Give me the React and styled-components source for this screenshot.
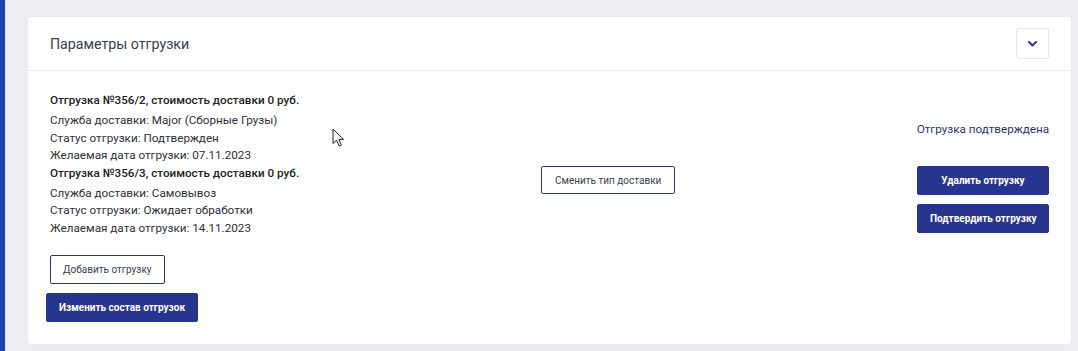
import React from "react";
import styled, { createGlobalStyle } from "styled-components";

const Global = createGlobalStyle`
  html, body { margin: 0; padding: 0; }
  body {
    background: #ececf2;
    font-family: Roboto, "Noto Sans", Arial, sans-serif;
    width: 1078px;
    height: 351px;
    overflow: hidden;
  }
`;

const Page = styled.div`
  position: relative;
  display: flex;
  height: 351px;
`;

const SideStrip = styled.div`
  width: 5px;
  flex: none;
  background: #1a3fb6;
`;

const Main = styled.div`
  flex: 1;
  padding: 17px 7px 7px 23px;
`;

const Card = styled.section`
  background: #fff;
  border-radius: 3px;
  box-shadow: 0 0 1px rgba(40, 40, 80, 0.08);
`;

const Header = styled.header`
  display: flex;
  align-items: center;
  justify-content: space-between;
  height: 53px;
  padding: 0 22px;
  border-bottom: 1px solid #ebebf0;
`;

const Title = styled.h2`
  margin: 0;
  font-size: 14.2px;
  font-weight: 400;
  color: #3b3e4f;
`;

const ToggleButton = styled.button`
  width: 33px;
  height: 31px;
  display: flex;
  align-items: center;
  justify-content: center;
  background: #fff;
  border: 1px solid #e6e6ee;
  border-radius: 2px;
  padding: 0;
  color: #283593;
`;

const Body = styled.div`
  display: grid;
  grid-template-columns: 491px auto 1fr;
  padding: 21px 22px 22px 22px;
`;

const LeftCol = styled.div`
  display: flex;
  flex-direction: column;
  align-items: flex-start;
`;

const Shipment = styled.div`
  display: flex;
  flex-direction: column;
  color: #2f2f35;
  font-size: 11.7px;
`;

const ShipTitle = styled.div`
  font-weight: 500;
  line-height: 16px;
  margin-bottom: 4px;
  color: #222;
`;

const Line = styled.div`
  line-height: 17.6px;
`;

const Button = styled.button`
  height: 29px;
  padding: 0 ${(p) => p.$px || 12}px;
  font-family: Roboto, Arial, sans-serif;
  font-size: 10px;
  border-radius: 2px;
  cursor: pointer;
  white-space: nowrap;
  ${(p) =>
    p.$filled
      ? `
    background: #27358f;
    border: 1px solid #27358f;
    color: #fff;
    font-weight: 700;
  `
      : `
    background: #fff;
    border: 1px solid #2c3680;
    color: #3a3d55;
    font-weight: 400;
  `}
`;

const LeftButtons = styled.div`
  display: flex;
  flex-direction: column;
  align-items: flex-start;
  gap: 9px;
  margin-top: 17px;
`;

const ShiftedButton = styled(Button)`
  margin-left: -4px;
`;

const MiddleCol = styled.div`
  padding-top: 74px;
`;

const RightCol = styled.div`
  display: flex;
  flex-direction: column;
  align-items: flex-end;
  padding-top: 29px;
`;

const Status = styled.div`
  font-size: 11.7px;
  line-height: 16px;
  color: #2b3378;
  margin-bottom: 29px;
`;

const RightButtons = styled.div`
  display: flex;
  flex-direction: column;
  gap: 9px;
  width: 132px;
`;

const Cursor = styled.svg`
  position: absolute;
  left: 332px;
  top: 128px;
`;

const shipments = [
  {
    title: "Отгрузка №356/2, стоимость доставки 0 руб.",
    service: "Major (Сборные Грузы)",
    status: "Подтвержден",
    date: "07.11.2023",
  },
  {
    title: "Отгрузка №356/3, стоимость доставки 0 руб.",
    service: "Самовывоз",
    status: "Ожидает обработки",
    date: "14.11.2023",
  },
];

export default function App() {
  return (
    <>
      <Global />
      <Page>
        <SideStrip />
        <Main>
          <Card>
            <Header>
              <Title>Параметры отгрузки</Title>
              <ToggleButton aria-label="Свернуть">
                <svg width="9" height="6" viewBox="0 0 9 6">
                  <path
                    d="M1 1 L4.5 4.5 L8 1"
                    fill="none"
                    stroke="currentColor"
                    strokeWidth="2"
                    strokeLinecap="round"
                    strokeLinejoin="round"
                  />
                </svg>
              </ToggleButton>
            </Header>
            <Body>
              <LeftCol>
                {shipments.map((s) => (
                  <Shipment key={s.title}>
                    <ShipTitle>{s.title}</ShipTitle>
                    <Line>Служба доставки: {s.service}</Line>
                    <Line>Статус отгрузки: {s.status}</Line>
                    <Line>Желаемая дата отгрузки: {s.date}</Line>
                  </Shipment>
                ))}
                <LeftButtons>
                  <Button $px={12}>Добавить отгрузку</Button>
                  <ShiftedButton $filled $px={12}>
                    Изменить состав отгрузок
                  </ShiftedButton>
                </LeftButtons>
              </LeftCol>
              <MiddleCol>
                <Button $px={13} style={{ height: 28 }}>
                  Сменить тип доставки
                </Button>
              </MiddleCol>
              <RightCol>
                <Status>Отгрузка подтверждена</Status>
                <RightButtons>
                  <Button $filled>Удалить отгрузку</Button>
                  <Button $filled>Подтвердить отгрузку</Button>
                </RightButtons>
              </RightCol>
            </Body>
          </Card>
        </Main>
        <Cursor width="14" height="20" viewBox="0 0 14 20">
          <path
            d="M1 1 L1 15.5 L4.6 12.2 L7.2 18.2 L9.4 17.2 L6.9 11.4 L11.6 11.4 Z"
            fill="#fff"
            stroke="#222"
            strokeWidth="1"
            strokeLinejoin="round"
          />
        </Cursor>
      </Page>
    </>
  );
}
